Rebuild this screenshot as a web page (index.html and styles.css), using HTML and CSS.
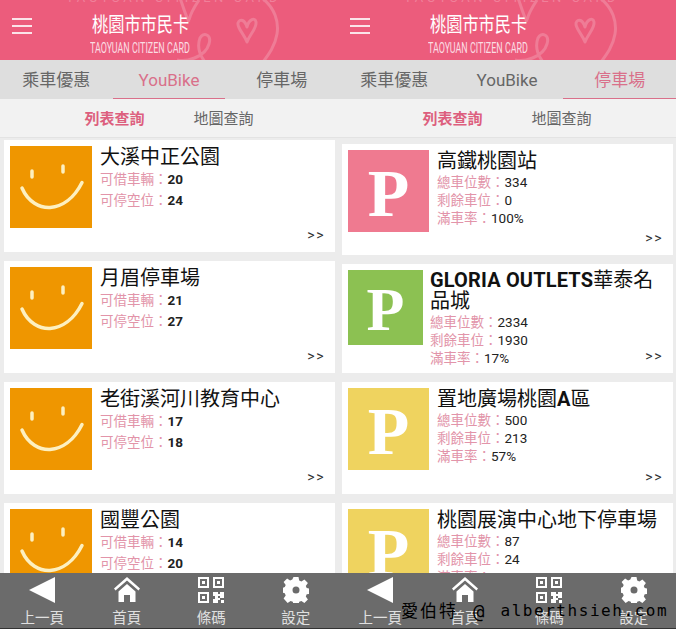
FILE: index.html
```html
<!DOCTYPE html>
<html lang="zh-Hant">
<head>
  <meta charset="UTF-8" />
  <title>桃園市市民卡</title>
  <link rel="stylesheet" href="styles.css">
</head>
<body>
  <div class="shot">
    <!-- YouBike -->
    <div class="phone">
      <div class="top">
        <div class="faint">TAOYUAN CITIZEN CARD</div>
        <svg class="burger" viewBox="0 0 20 16"><path d="M0 1h20M0 8h20M0 15h20"/></svg>
        <svg class="deco" viewBox="0 0 150 60"><path d="M107 -2C120 8 124 22 122 34C120 46 114 54 108 62M25 -2C28 6 30 14 34 22M34 20C36 12 40 6 44 0M22 60C30 62 50 58 54 44C57 34 48 32 45 38C42 46 44 54 50 62"/><path class="heart" d="M92 42C89 34 82 28 83 23C85 18 90 20 92 27C94 19 100 17 101 22C102 28 95 34 92 42z"/></svg>
        <div class="logo">
          <div class="logo-cn">桃園市市民卡</div>
          <div class="logo-en">TAOYUAN CITIZEN CARD</div>
        </div>
      </div>
      <div class="tabs">
        <div class="tab">乘車優惠</div>
        <div class="tab active">YouBike</div>
        <div class="tab">停車場</div>
      </div>
      <div class="subtabs">
        <div class="sub active">列表查詢</div>
        <div class="sub">地圖查詢</div>
      </div>
      <div class="list">
        <div class="card">
          <svg class="pic smile" viewBox="0 0 82 82"><rect class="face" width="82" height="82"/><path d="M22 25v6M53 20v6M12 42c6 14 18 20 28 19.500c12-1 24-9 32-25"/></svg>
          <div class="info">
            <div class="name">大溪中正公園</div>
            <div class="row"><span class="lbl">可借車輛：</span><b>20</b></div>
            <div class="row"><span class="lbl">可停空位：</span><b>24</b></div>
          </div>
          <span class="more">&gt;&gt;</span>
        </div>
        <div class="card">
          <svg class="pic smile" viewBox="0 0 82 82"><rect class="face" width="82" height="82"/><path d="M22 25v6M53 20v6M12 42c6 14 18 20 28 19.500c12-1 24-9 32-25"/></svg>
          <div class="info">
            <div class="name">月眉停車場</div>
            <div class="row"><span class="lbl">可借車輛：</span><b>21</b></div>
            <div class="row"><span class="lbl">可停空位：</span><b>27</b></div>
          </div>
          <span class="more">&gt;&gt;</span>
        </div>
        <div class="card">
          <svg class="pic smile" viewBox="0 0 82 82"><rect class="face" width="82" height="82"/><path d="M22 25v6M53 20v6M12 42c6 14 18 20 28 19.500c12-1 24-9 32-25"/></svg>
          <div class="info">
            <div class="name">老街溪河川教育中心</div>
            <div class="row"><span class="lbl">可借車輛：</span><b>17</b></div>
            <div class="row"><span class="lbl">可停空位：</span><b>18</b></div>
          </div>
          <span class="more">&gt;&gt;</span>
        </div>
        <div class="card">
          <svg class="pic smile" viewBox="0 0 82 82"><rect class="face" width="82" height="82"/><path d="M22 25v6M53 20v6M12 42c6 14 18 20 28 19.500c12-1 24-9 32-25"/></svg>
          <div class="info">
            <div class="name">國豐公園</div>
            <div class="row"><span class="lbl">可借車輛：</span><b>14</b></div>
            <div class="row"><span class="lbl">可停空位：</span><b>20</b></div>
          </div>
          <span class="more">&gt;&gt;</span>
        </div>
      </div>
      <div class="nav">
        <div class="nav-item"><svg viewBox="0 0 26 26"><path d="M0 13L26 0v26z"/></svg><span>上一頁</span></div>
        <div class="nav-item"><svg viewBox="0 0 26 26"><path d="M13 0L0 11.500l1.500 2L13 3.500l11.500 10 1.500-2zM4.500 14.500L13 7l8.500 7.500V25h-5.500v-7h-6v7H4.500z"/></svg><span>首頁</span></div>
        <div class="nav-item"><svg viewBox="0 0 26 26"><path fill-rule="evenodd" d="M0 0h11v11H0zM2 2v7h7V2zM4 4h3v3H4zM15 0h11v11H15zM17 2v7h7V2zM19 4h3v3h-3zM0 15h11v11H0zM2 17v7h7v-7zM4 19h3v3H4zM15 15h5v2h2v-2h4v6h-4v-2h-2v2h2v2h-2v3h-5v-4h2v-3h-2zM23 23h3v3h-3z"/></svg><span>條碼</span></div>
        <div class="nav-item"><svg viewBox="0 0 26 26"><path fill-rule="evenodd" d="M10.500 0h5l.7 3.600 2.200.9 3-2.100 3.500 3.500-2.100 3 .9 2.200 3.300.6v5l-3.300.6-.9 2.200 2.100 3-3.500 3.500-3-2.100-2.200.9-.7 3.200h-5l-.7-3.200-2.200-.9-3 2.100L.6 21.500l2.100-3-.9-2.200-1.800-.6v-5l1.800-.6.9-2.200-2.100-3L4.100 1.400l3 2.100 2.200-.9zM13 9.500a3.500 3.500 0 1 0 0 7a3.500 3.500 0 0 0 0-7z"/></svg><span>設定</span></div>
      </div>
    </div>
    <!-- 停車場 -->
    <div class="phone">
      <div class="top">
        <div class="faint">TAOYUAN CITIZEN CARD</div>
        <svg class="burger" viewBox="0 0 20 16"><path d="M0 1h20M0 8h20M0 15h20"/></svg>
        <svg class="deco" viewBox="0 0 150 60"><path d="M107 -2C120 8 124 22 122 34C120 46 114 54 108 62M25 -2C28 6 30 14 34 22M34 20C36 12 40 6 44 0M22 60C30 62 50 58 54 44C57 34 48 32 45 38C42 46 44 54 50 62"/><path class="heart" d="M92 42C89 34 82 28 83 23C85 18 90 20 92 27C94 19 100 17 101 22C102 28 95 34 92 42z"/></svg>
        <div class="logo">
          <div class="logo-cn">桃園市市民卡</div>
          <div class="logo-en">TAOYUAN CITIZEN CARD</div>
        </div>
      </div>
      <div class="tabs">
        <div class="tab">乘車優惠</div>
        <div class="tab">YouBike</div>
        <div class="tab active">停車場</div>
      </div>
      <div class="subtabs">
        <div class="sub active">列表查詢</div>
        <div class="sub">地圖查詢</div>
      </div>
      <div class="list list-park">
        <div class="card card-a">
          <div class="pic park red">P</div>
          <div class="info">
            <div class="name">高鐵桃園站</div>
            <div class="row"><span class="lbl">總車位數：</span>334</div>
            <div class="row"><span class="lbl">剩餘車位：</span>0</div>
            <div class="row"><span class="lbl">滿車率：</span>100%</div>
          </div>
          <span class="more">&gt;&gt;</span>
        </div>
        <div class="card card-b">
          <div class="pic park green">P</div>
          <div class="info">
            <div class="name two"><b>GLORIA OUTLETS</b>華泰名品城</div>
            <div class="row"><span class="lbl">總車位數：</span>2334</div>
            <div class="row"><span class="lbl">剩餘車位：</span>1930</div>
            <div class="row"><span class="lbl">滿車率：</span>17%</div>
          </div>
          <span class="more">&gt;&gt;</span>
        </div>
        <div class="card">
          <div class="pic park yellow">P</div>
          <div class="info">
            <div class="name">置地廣場桃園<b>A</b>區</div>
            <div class="row"><span class="lbl">總車位數：</span>500</div>
            <div class="row"><span class="lbl">剩餘車位：</span>213</div>
            <div class="row"><span class="lbl">滿車率：</span>57%</div>
          </div>
          <span class="more">&gt;&gt;</span>
        </div>
        <div class="card">
          <div class="pic park yellow">P</div>
          <div class="info">
            <div class="name">桃園展演中心地下停車場</div>
            <div class="row"><span class="lbl">總車位數：</span>87</div>
            <div class="row"><span class="lbl">剩餘車位：</span>24</div>
            <div class="row"><span class="lbl">滿車率：</span>72%</div>
          </div>
          <span class="more">&gt;&gt;</span>
        </div>
      </div>
      <div class="nav">
        <div class="nav-item"><svg viewBox="0 0 26 26"><path d="M0 13L26 0v26z"/></svg><span>上一頁</span></div>
        <div class="nav-item"><svg viewBox="0 0 26 26"><path d="M13 0L0 11.500l1.500 2L13 3.500l11.500 10 1.500-2zM4.500 14.500L13 7l8.500 7.500V25h-5.500v-7h-6v7H4.500z"/></svg><span>首頁</span></div>
        <div class="nav-item"><svg viewBox="0 0 26 26"><path fill-rule="evenodd" d="M0 0h11v11H0zM2 2v7h7V2zM4 4h3v3H4zM15 0h11v11H15zM17 2v7h7V2zM19 4h3v3h-3zM0 15h11v11H0zM2 17v7h7v-7zM4 19h3v3H4zM15 15h5v2h2v-2h4v6h-4v-2h-2v2h2v2h-2v3h-5v-4h2v-3h-2zM23 23h3v3h-3z"/></svg><span>條碼</span></div>
        <div class="nav-item"><svg viewBox="0 0 26 26"><path fill-rule="evenodd" d="M10.500 0h5l.7 3.600 2.200.9 3-2.100 3.500 3.500-2.100 3 .9 2.200 3.300.6v5l-3.300.6-.9 2.200 2.100 3-3.500 3.500-3-2.100-2.200.9-.7 3.200h-5l-.7-3.200-2.200-.9-3 2.100L.6 21.500l2.100-3-.9-2.200-1.800-.6v-5l1.800-.6.9-2.200-2.100-3L4.100 1.400l3 2.100 2.200-.9zM13 9.500a3.500 3.500 0 1 0 0 7a3.500 3.500 0 0 0 0-7z"/></svg><span>設定</span></div>
      </div>
    </div>
    <div class="watermark"><span class="wm-cn">愛伯特</span><span class="wm-at">@</span><span class="wm-url">alberthsieh.com</span></div>
  </div>
</body>
</html>
```

FILE: styles.css
```css
html, body {
  margin: 0;
  padding: 0;
  background: #fff;
}
body {
  font-family: "Roboto", "Noto Sans CJK TC", sans-serif;
}
.shot {
  position: relative;
  display: flex;
  width: 676px;
  height: 630px;
  overflow: hidden;
}
.phone {
  position: relative;
  width: 338px;
  height: 629px;
  display: flex;
  flex-direction: column;
  background: #ececec;
  overflow: hidden;
}

/* header */
.top {
  position: relative;
  flex: none;
  height: 60px;
  background: #ec5c7c;
  display: flex;
  align-items: flex-start;
  overflow: hidden;
}
.faint {
  position: absolute;
  left: 66px;
  top: -9px;
  font-size: 13px;
  line-height: 14px;
  letter-spacing: 3.500px;
  color: #f0809a;
  white-space: nowrap;
}
.burger {
  flex: none;
  width: 20px;
  height: 16px;
  margin: 18px 0 0 12px;
  fill: none;
  stroke: #fbe4e9;
  stroke-width: 2;
}
.deco {
  position: absolute;
  left: 155px;
  top: 0;
  width: 150px;
  height: 60px;
  fill: none;
  stroke: #ef7c96;
  stroke-width: 3;
}
.deco .heart {
  stroke-width: 3;
  stroke-linejoin: round;
}
.logo {
  position: relative;
  margin: 13px 0 0 58px;
  color: #fff;
  width: 100px;
}
.logo-cn {
  font-size: 20px;
  line-height: 25px;
  white-space: nowrap;
  transform: scaleX(.81);
  transform-origin: left center;
  margin-left: 2px;
}
.logo-en {
  font-size: 14px;
  line-height: 16px;
  margin-top: 2px;
  color: #fbdce3;
  white-space: nowrap;
  transform: scaleX(.64);
  transform-origin: left center;
}

/* tabs */
.tabs {
  flex: none;
  height: 39px;
  display: flex;
  background: #dedede;
}
.tab {
  flex: 1;
  text-align: center;
  font-size: 17px;
  line-height: 40px;
  color: #666;
  box-sizing: border-box;
}
.tab.active {
  color: #d9708a;
  border-bottom: 1px solid #d9708a;
}
.subtabs {
  flex: none;
  height: 39px;
  display: flex;
  justify-content: center;
  gap: 49px;
  background: #f2f2f2;
  border-bottom: 1px solid #e3e3e3;
  box-sizing: border-box;
}
.sub {
  font-size: 15px;
  line-height: 40px;
  color: #666;
}
.sub.active {
  color: #dd5f7e;
  font-weight: 700;
}

/* list */
.list {
  flex: 1;
  min-height: 0;
  display: flex;
  flex-direction: column;
  gap: 9px;
  padding: 2px 3px 0 4px;
}
.list-park {
  padding-top: 6px;
}
.card {
  position: relative;
  flex: none;
  height: 112px;
  display: flex;
  align-items: flex-start;
  gap: 8px;
  padding: 6px;
  box-sizing: border-box;
  background: #fff;
}
.card-a {
  height: 111px;
}
.card-b {
  height: 109px;
}
.pic {
  flex: none;
  width: 82px;
  height: 82px;
}
.smile {
  fill: none;
  stroke: #fdf0c0;
  stroke-width: 3.500;
  stroke-linecap: round;
}
.smile .face {
  fill: #ef9600;
  stroke: none;
}
.park {
  width: 81px;
  color: #fff;
  font-family: "Liberation Serif", serif;
  font-weight: 700;
  font-size: 68px;
  line-height: 86px;
  text-align: center;
  overflow: hidden;
}
.red { background: #ef7a90; }
.green {
  background: #8cc152;
  width: 75px;
  height: 75px;
  font-size: 62px;
  line-height: 79px;
  margin-right: -1px;
}
.yellow { background: #efd35f; }
.info {
  min-width: 0;
  flex: 1;
}
.name {
  font-size: 20px;
  line-height: 23px;
  color: #111;
}
.name.two {
  line-height: 21px;
  margin-bottom: 1px;
}
.name b {
  font-weight: 700;
  letter-spacing: .15px;
}
.row {
  font-size: 13.500px;
  line-height: 21px;
  color: #222;
}
.row b {
  font-weight: 700;
}
.lbl {
  color: #e294a9;
}
.list-park .row {
  line-height: 18px;
}
.more {
  position: absolute;
  right: 10px;
  bottom: 9px;
  font-size: 14px;
  line-height: 16px;
  color: #333;
  letter-spacing: 1.500px;
}

/* bottom nav */
.nav {
  position: absolute;
  left: 0;
  right: 0;
  bottom: 0;
  height: 56px;
  display: flex;
  padding-top: 4px;
  box-sizing: border-box;
  background: #6b6b6b;
  border-bottom: 1px solid #333;
}
.nav-item {
  flex: 1;
  display: flex;
  flex-direction: column;
  align-items: center;
  color: #e0e0e0;
  font-size: 14.500px;
  line-height: 18px;
}
.nav-item svg {
  width: 26px;
  height: 26px;
  fill: #fff;
  margin-bottom: 7px;
}
.watermark {
  position: absolute;
  left: 401px;
  top: 600px;
  display: flex;
  align-items: center;
  font-family: "DejaVu Sans Mono", "Noto Sans CJK TC", monospace;
  line-height: 22px;
  color: #000;
  white-space: nowrap;
}
.wm-cn {
  font-size: 17px;
  letter-spacing: 2px;
}
.wm-at {
  font-size: 19px;
  margin-left: 15px;
}
.wm-url {
  font-size: 16px;
  letter-spacing: 1.550px;
  margin-left: 16px;
}
```
